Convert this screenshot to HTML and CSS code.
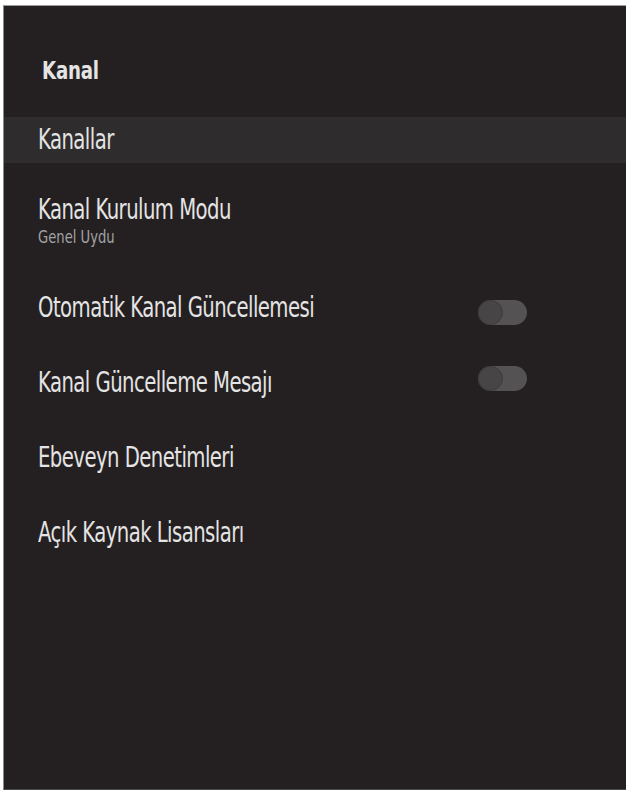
FILE: index.html
```html
<!DOCTYPE html>
<html lang="tr">
<head>
<meta charset="utf-8">
<title>Kanal</title>
<link rel="stylesheet" href="styles.css">
</head>
<body>
<div class="panel">
  <header class="header"><span class="title">Kanal</span></header>
  <ul class="menu">
    <li class="item item--active"><span class="label">Kanallar</span></li>
    <li class="item item--sub">
      <span class="label">Kanal Kurulum Modu</span>
      <span class="sublabel">Genel Uydu</span>
    </li>
    <li class="item"><span class="label">Otomatik Kanal Güncellemesi</span><span class="toggle toggle--low"></span></li>
    <li class="item"><span class="label">Kanal Güncelleme Mesajı</span><span class="toggle toggle--high"></span></li>
    <li class="item"><span class="label">Ebeveyn Denetimleri</span></li>
    <li class="item"><span class="label">Açık Kaynak Lisansları</span></li>
  </ul>
</div>
</body>
</html>
```
FILE: styles.css
```css
html, body {
  margin: 0;
  padding: 0;
  background: #ffffff;
}
body {
  width: 626px;
  height: 792px;
  overflow: hidden;
  font-family: "DejaVu Sans Condensed", "DejaVu Sans", sans-serif;
}
.panel {
  box-sizing: border-box;
  margin: 5px 0 0 3px;
  height: 785px;
  background: #242022;
  border-top: 1px solid #9c9c9c;
  border-left: 1px solid #8a8a8a;
  border-bottom: 1px solid #4a4a4a;
  color: #e4e4e4;
}
.header {
  box-sizing: border-box;
  height: 111px;
  padding: 52px 0 0 38px;
}
.title {
  display: inline-block;
  font-size: 25px;
  line-height: 25px;
  font-weight: bold;
  letter-spacing: -0.3px;
  transform: scaleX(0.81);
  transform-origin: left center;
}
.menu {
  list-style: none;
  margin: 0;
  padding: 0;
}
.item {
  box-sizing: border-box;
  height: 75px;
  display: flex;
  align-items: center;
  justify-content: space-between;
  padding: 0 99px 0 34px;
}
.item--active {
  height: 46px;
  background: #2f2c2d;
}
.item--sub {
  height: 107px;
  flex-direction: column;
  align-items: flex-start;
  justify-content: flex-start;
  padding-top: 33px;
}
.label {
  display: inline-block;
  font-size: 28px;
  line-height: 28px;
  letter-spacing: -0.7px;
  transform: scaleX(0.78);
  transform-origin: left center;
  white-space: nowrap;
}
.sublabel {
  display: inline-block;
  margin-top: 4px;
  font-size: 17px;
  line-height: 18px;
  color: #a2a2a2;
  transform: scaleX(0.86);
  transform-origin: left center;
}
.toggle {
  position: relative;
  width: 49px;
  height: 25px;
  border-radius: 13px;
  background: #545253;
}
.toggle::before {
  content: "";
  position: absolute;
  left: 0;
  top: 0;
  width: 25px;
  height: 25px;
  box-sizing: border-box;
  border-radius: 50%;
  background: #474546;
  border: 1px solid #3c3a3b;
}
.toggle--low {
  margin-top: 9px;
}
.toggle--high {
  margin-bottom: 9px;
}
```
